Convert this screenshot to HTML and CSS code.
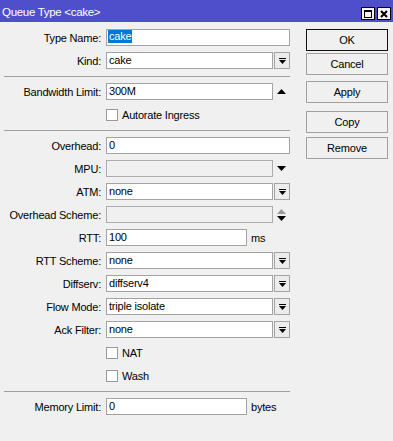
FILE: index.html
```html
<html>
	<head>
		<title>Queue Type &lt;cake&gt;</title>
		<link rel="stylesheet" href="styles.css">
	</head>
	<body>
		<div class="window">
			<div class="titlebar">
				<span class="title">Queue Type &lt;cake&gt;</span>
				<span class="wbtn">
					<svg width="8" height="8" viewBox="0 0 8 8"><rect x="0.5" y="0.5" width="7" height="7" fill="none" stroke="#000"/><rect x="0" y="0" width="8" height="2" fill="#000"/></svg>
				</span>
				<span class="wbtn last">
					<svg width="8" height="8" viewBox="0 0 8 8"><path d="M1 1L7 7M7 1L1 7" stroke="#000" stroke-width="2"/></svg>
				</span>
			</div>

			<div class="content">
				<div class="form">
					<div class="row">
						<label>Type Name:</label>
						<div class="field"><span class="hilite">cake</span></div>
					</div>
					<div class="row">
						<label>Kind:</label>
						<div class="combo">
							<div class="field">cake</div>
							<span class="drop"><svg width="7" height="6" viewBox="0 0 7 6"><rect x="0" y="0" width="7" height="1"/><polygon points="0,2 7,2 3.5,6"/></svg></span>
						</div>
					</div>

					<div class="sep"></div>

					<div class="row">
						<label>Bandwidth Limit:</label>
						<div class="combo">
							<div class="field">300M</div>
							<span class="spin"><svg width="9" height="5" viewBox="0 0 9 5"><polygon points="0,5 9,5 4.5,0"/></svg></span>
						</div>
					</div>
					<div class="row">
						<label></label>
						<div class="check"><span class="cb"></span>Autorate Ingress</div>
					</div>

					<div class="sep"></div>

					<div class="row">
						<label>Overhead:</label>
						<div class="field">0</div>
					</div>
					<div class="row">
						<label>MPU:</label>
						<div class="combo">
							<div class="field off"></div>
							<span class="spin"><svg width="9" height="5" viewBox="0 0 9 5"><polygon points="0,0 9,0 4.5,5"/></svg></span>
						</div>
					</div>
					<div class="row">
						<label>ATM:</label>
						<div class="combo">
							<div class="field">none</div>
							<span class="drop"><svg width="7" height="6" viewBox="0 0 7 6"><rect x="0" y="0" width="7" height="1"/><polygon points="0,2 7,2 3.5,6"/></svg></span>
						</div>
					</div>
					<div class="row">
						<label>Overhead Scheme:</label>
						<div class="combo">
							<div class="field off"></div>
							<span class="spin"><svg width="9" height="12" viewBox="0 0 9 12"><polygon points="0,5 9,5 4.5,0" fill="#9a9a9a"/><polygon points="0,7 9,7 4.5,12"/></svg></span>
						</div>
					</div>
					<div class="row">
						<label>RTT:</label>
						<div class="combo">
							<div class="field short">100</div>
							<span class="unit">ms</span>
						</div>
					</div>
					<div class="row">
						<label>RTT Scheme:</label>
						<div class="combo">
							<div class="field">none</div>
							<span class="drop"><svg width="7" height="6" viewBox="0 0 7 6"><rect x="0" y="0" width="7" height="1"/><polygon points="0,2 7,2 3.5,6"/></svg></span>
						</div>
					</div>
					<div class="row">
						<label>Diffserv:</label>
						<div class="combo">
							<div class="field">diffserv4</div>
							<span class="drop"><svg width="7" height="6" viewBox="0 0 7 6"><rect x="0" y="0" width="7" height="1"/><polygon points="0,2 7,2 3.5,6"/></svg></span>
						</div>
					</div>
					<div class="row">
						<label>Flow Mode:</label>
						<div class="combo">
							<div class="field">triple isolate</div>
							<span class="drop"><svg width="7" height="6" viewBox="0 0 7 6"><rect x="0" y="0" width="7" height="1"/><polygon points="0,2 7,2 3.5,6"/></svg></span>
						</div>
					</div>
					<div class="row">
						<label>Ack Filter:</label>
						<div class="combo">
							<div class="field">none</div>
							<span class="drop"><svg width="7" height="6" viewBox="0 0 7 6"><rect x="0" y="0" width="7" height="1"/><polygon points="0,2 7,2 3.5,6"/></svg></span>
						</div>
					</div>
					<div class="row">
						<label></label>
						<div class="check"><span class="cb"></span>NAT</div>
					</div>
					<div class="row">
						<label></label>
						<div class="check"><span class="cb"></span>Wash</div>
					</div>

					<div class="sep"></div>

					<div class="row">
						<label>Memory Limit:</label>
						<div class="combo">
							<div class="field short">0</div>
							<span class="unit">bytes</span>
						</div>
					</div>
				</div>

				<div class="side">
					<div class="btn default">OK</div>
					<div class="btn cancel">Cancel</div>
					<div class="btn apply">Apply</div>
					<div class="btn copy">Copy</div>
					<div class="btn remove">Remove</div>
				</div>
			</div>
		</div>
	</body>
</html>
```

FILE: styles.css
```css
body {
	margin: 0;
	background-color: #f0f0f0;
	font-family: "Liberation Sans", Arial, sans-serif;
	font-size: 11px;
	letter-spacing: -0.2px;
	color: #000;
}

.window {
	width: 393px;
	height: 441px;
}

.titlebar {
	height: 22px;
	background-color: #4f4fcc;
	display: flex;
	align-items: flex-start;
}

.title {
	flex: 1;
	color: #fff;
	font-size: 11.5px;
	letter-spacing: -0.3px;
	line-height: 14px;
	padding: 5px 0 0 2px;
}

.wbtn {
	width: 12px;
	height: 11px;
	margin: 7px 0 0 2px;
	border: solid 1px #000;
	background-color: #f4f4f4;
	display: flex;
	align-items: center;
	justify-content: center;
}

.wbtn.last {
	margin-right: 2px;
}

.content {
	display: flex;
}

.form {
	width: 286px;
	padding: 7px 0 0 4px;
	display: flex;
	flex-direction: column;
	gap: 6px;
}

.row {
	display: grid;
	grid-template-columns: 97px 184px;
	column-gap: 5px;
	align-items: center;
	height: 17px;
}

.row label {
	text-align: right;
	white-space: nowrap;
}

.sep {
	height: 1px;
	margin-top: 1px;
	background-color: #a0a0a0;
}

.field {
	box-sizing: border-box;
	width: 184px;
	height: 17px;
	line-height: 15px;
	padding-left: 2px;
	border: solid 1px #a3a3a3;
	background-color: #fff;
	white-space: nowrap;
}

.combo {
	display: flex;
	align-items: center;
}

.combo .field {
	width: 167px;
}

.combo .field.short {
	width: 141px;
}

.field.off {
	background-color: #f0f0f0;
	border-color: #adadad;
}

.hilite {
	display: inline-block;
	line-height: 13px;
	padding: 0 1px;
	margin-left: -1px;
	background-color: #0078d7;
	color: #fff;
}

.drop {
	box-sizing: border-box;
	width: 16px;
	height: 17px;
	margin-left: 1px;
	border: solid 1px #a3a3a3;
	background-color: #ececec;
	display: flex;
	align-items: center;
	justify-content: center;
}

.spin {
	width: 17px;
	display: flex;
	justify-content: center;
}

.unit {
	margin-left: 4px;
}

.check {
	grid-column: 2;
	display: flex;
	align-items: center;
	gap: 4px;
}

.cb {
	box-sizing: border-box;
	width: 12px;
	height: 12px;
	border: solid 1px #999;
	background-color: #fff;
}

.side {
	width: 82px;
	margin-left: 16px;
	padding-top: 7px;
	display: flex;
	flex-direction: column;
}

.btn {
	box-sizing: border-box;
	height: 22px;
	line-height: 20px;
	text-align: center;
	border: solid 1px #a0a0a0;
	background-color: #f0f0f0;
}

.btn.default {
	border-color: #111;
}

.cancel { margin-top: 2px; }
.apply { margin-top: 6px; }
.copy { margin-top: 8px; }
.remove { margin-top: 4px; }
```
